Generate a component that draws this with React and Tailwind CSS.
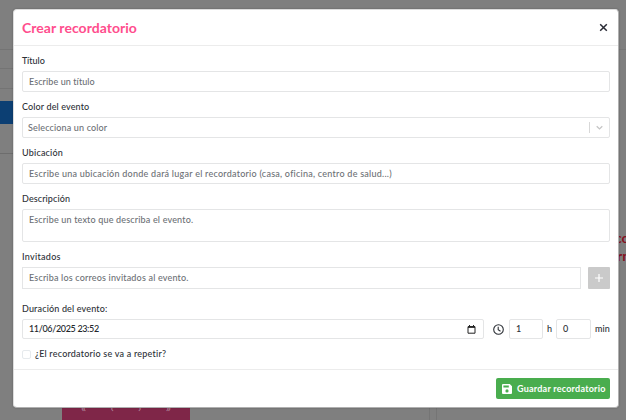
const input = "flex items-center rounded-[2px] border border-[#e4e5e6] bg-white px-[6px] text-[#6c7075]";

function Field({ label, tracking, className, children }) {
  return (
    <div className={className}>
      <div className={`h-[20px] pt-[4px] text-[#2c3036] leading-[12px] ${tracking}`}>{label}</div>
      {children}
    </div>
  );
}

function Backdrop() {
  return (
    <div className="flex h-full flex-col justify-between bg-[#7f7f7f]">
      <div className="flex justify-between">
        <div className="w-[14px]">
          <div className="h-[50px] border-b border-[#747474]" />
          <div className="h-[19px] border-b border-[#747474]" />
          <div className="h-[20px] border-b border-[#747474]" />
          <div className="mt-[12px] h-[23px] bg-[#0c3f73]" />
          <div className="h-[30px] border-b border-[#6d6d6d]" />
        </div>
        <div className="w-[8px]">
          <div className="h-[50px] border-b border-[#777777]" />
          <div className="mt-[179px] whitespace-nowrap text-[14px] font-bold leading-[18px] text-[#85101f]">
            <div className="-ml-[3px]">co</div>
            <div className="-ml-px">rn</div>
          </div>
        </div>
      </div>
      <div className="flex h-[14px]">
        <div className="ml-[62px] flex w-[128px] justify-between bg-[#7f2648] px-[19px] text-[12px] leading-[4px] text-[#b0859a]">
          <span>«</span><span>‹</span><span>›</span><span>»</span>
        </div>
        <div className="ml-[239px] w-[8px] border-x border-[#757575]" />
      </div>
    </div>
  );
}

export default function App() {
  return (
    <div className="relative h-[420px] w-[626px] overflow-hidden font-['Lato',sans-serif] text-[9px] font-medium">
      <Backdrop />
      <div className="absolute left-[13px] top-[9px] flex h-[399px] w-[606px] flex-col rounded-[4px] border border-[#b0b0b0] border-t-[#dddddd] border-l-[#dddddd] bg-white shadow-[0_0_2px_rgba(0,0,0,0.3)]">
        <header className="flex h-[36px] shrink-0 items-center justify-between border-b border-[#ececec] pl-[8px] pr-[10px]">
          <h1 className="text-[14px] font-bold leading-[18px] tracking-[0.03px] text-[#ff4d8d]">Crear recordatorio</h1>
          <svg className="size-[9px]" viewBox="0 0 9 9" fill="none" stroke="#292b35" strokeWidth="1.5"><path d="M1.2 1.2 7.8 7.8M7.8 1.2 1.2 7.8" /></svg>
        </header>
        <main className="flex h-[324px] shrink-0 flex-col border-b border-[#ececec] px-[8px] pt-[5px]">
          <Field label="Título" tracking="tracking-[0.01px]" className="h-[46px]">
            <div className={`${input} h-[21px] tracking-[0.09px]`}>Escribe un título</div>
          </Field>
          <Field label="Color del evento" tracking="tracking-[0.13px]" className="h-[46px]">
            <div className={`${input} h-[21px] justify-between pl-[5px] tracking-[0.15px]`}>
              <span>Selecciona un color</span>
              <span className="flex items-center gap-[6px]">
                <i className="h-[11px] w-px bg-[#d8d8d8]" />
                <svg className="size-[7px]" viewBox="0 0 7 7" fill="none" stroke="#c5c5c5" strokeWidth="1.3"><path d="m.7 2.2 2.8 2.7 2.8-2.7" /></svg>
              </span>
            </div>
          </Field>
          <Field label="Ubicación" tracking="tracking-[0.2px]" className="h-[46px]">
            <div className={`${input} h-[21px] tracking-[0.25px]`}>Escribe una ubicación donde dará lugar el recordatorio (casa, oficina, centro de salud...)</div>
          </Field>
          <Field label="Descripción" tracking="tracking-[0.1px]" className="h-[58px]">
            <div className={`${input} h-[33px] pb-[11px] tracking-[0.17px]`}>Escribe un texto que describa el evento.</div>
          </Field>
          <Field label="Invitados" tracking="tracking-[0.3px]" className="h-[52px]">
            <div className="flex h-[22px] gap-[7px]">
              <div className={`${input} flex-1 rounded-none tracking-[0.18px]`}>Escriba los correos invitados al evento.</div>
              <button className="flex w-[22px] items-center justify-center rounded-[1px] bg-[#cacaca]">
                <svg className="size-[8px]" viewBox="0 0 8 8" stroke="white" strokeWidth="1.2"><path d="M4 0v8M0 4h8" /></svg>
              </button>
            </div>
          </Field>
          <Field label="Duración del evento:" tracking="tracking-[0.16px]" className="h-[49px]">
            <div className="flex h-[20px] items-center text-[#2c3036]">
              <div className="flex h-full w-[462px] items-center justify-between rounded-[2px] border border-[#e4e5e6] px-[6px]">
                <span className="tracking-[-0.35px] text-[#22262a]">11/06/2025 23:52</span>
                <svg className="mr-[1px] size-[9px]" viewBox="0 0 9 9" fill="none" stroke="#222"><path d="M1 1.7h7v6.5H1z" /><path d="M1 2h7" strokeWidth="1.7" /><path d="M2.5 0v1.5M6.5 0v1.5" /></svg>
              </div>
              <svg className="ml-[9px] size-[11px]" viewBox="0 0 11 11" fill="none" stroke="#2c3036" strokeWidth="1.1"><circle cx="5.5" cy="5.5" r="4.8" /><path d="M5.2 2.7v3l2.3 1.5" /></svg>
              <div className="ml-[5px] flex h-full w-[34px] items-center rounded-[2px] border border-[#e4e5e6] px-[6px]">1</div>
              <span className="ml-[4px] w-[9px]">h</span>
              <div className="flex h-full w-[35px] items-center rounded-[2px] border border-[#e4e5e6] px-[6px]">0</div>
              <span className="ml-[4px]">min</span>
            </div>
          </Field>
          <label className="flex items-center gap-[4px] text-[#2c3036]">
            <span className="size-[9px] rounded-[2px] border border-[#e6eaed] bg-white" />
            <span className="leading-[12px] tracking-[0.22px]">¿El recordatorio se va a repetir?</span>
          </label>
        </main>
        <footer className="flex h-[37px] shrink-0 items-center justify-end pr-[8px]">
          <button className="flex h-[21px] w-[114px] items-center rounded-[2px] bg-[#49ad4e] pl-[6px] font-bold text-white">
            <svg className="mr-[5px] size-[10px]" viewBox="0 0 10 10"><path fill="white" fillRule="evenodd" d="M1 0h6.8L10 2.2V9q0 1-1 1H1q-1 0-1-1V1q0-1 1-1Zm.4 1.4v2.2h5.4V1.4ZM5 5.3a1.6 1.6 0 1 0 0 3.2 1.6 1.6 0 0 0 0-3.2Z" /></svg>
            <span className="whitespace-nowrap tracking-[0.23px]">Guardar recordatorio</span>
          </button>
        </footer>
      </div>
    </div>
  );
}
